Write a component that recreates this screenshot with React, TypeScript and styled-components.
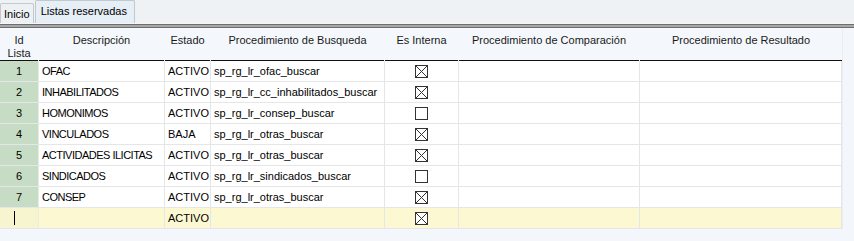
import React from 'react';
import styled, { createGlobalStyle } from 'styled-components';

const GlobalStyle = createGlobalStyle`
  body {
    margin: 0;
    background: #f3f7fb;
    font-family: "Liberation Sans", Arial, sans-serif;
    font-size: 11px;
    color: #000;
  }
`;

const cols = '39px 126px 46px 174px 74px 181px 202px';

const rows = [
  { id: 1, desc: 'OFAC', estado: 'ACTIVO', proc: 'sp_rg_lr_ofac_buscar', interna: true },
  { id: 2, desc: 'INHABILITADOS', estado: 'ACTIVO', proc: 'sp_rg_lr_cc_inhabilitados_buscar', interna: true },
  { id: 3, desc: 'HOMONIMOS', estado: 'ACTIVO', proc: 'sp_rg_lr_consep_buscar', interna: false },
  { id: 4, desc: 'VINCULADOS', estado: 'BAJA', proc: 'sp_rg_lr_otras_buscar', interna: true },
  { id: 5, desc: 'ACTIVIDADES ILICITAS', estado: 'ACTIVO', proc: 'sp_rg_lr_otras_buscar', interna: true },
  { id: 6, desc: 'SINDICADOS', estado: 'ACTIVO', proc: 'sp_rg_lr_sindicados_buscar', interna: false },
  { id: 7, desc: 'CONSEP', estado: 'ACTIVO', proc: 'sp_rg_lr_otras_buscar', interna: true },
];

function App() {
  return (
    <Page>
      <GlobalStyle />
      <TabBar>
        <Tab>Inicio</Tab>
        <Tab active>Listas reservadas</Tab>
      </TabBar>
      <Rule />
      <Body>
        <Grid>
          <HeadRow>
            <HeadCell>Id<br />Lista</HeadCell>
            <HeadCell>Descripción</HeadCell>
            <HeadCell>Estado</HeadCell>
            <HeadCell>Procedimiento de Busqueda</HeadCell>
            <HeadCell>Es Interna</HeadCell>
            <HeadCell>Procedimiento de Comparación</HeadCell>
            <HeadCell>Procedimiento de Resultado</HeadCell>
          </HeadRow>
          {rows.map((r) => (
            <Row key={r.id}>
              <IdCell>{r.id}</IdCell>
              <Cell caps>{r.desc}</Cell>
              <Cell>{r.estado}</Cell>
              <Cell>{r.proc}</Cell>
              <Cell center>
                <Check checked={r.interna} />
              </Cell>
              <Cell />
              <Cell />
            </Row>
          ))}
          <Row isNew>
            <IdCell isNew>
              <Caret />
            </IdCell>
            <Cell />
            <Cell>ACTIVO</Cell>
            <Cell />
            <Cell center>
              <Check checked />
            </Cell>
            <Cell />
            <Cell />
          </Row>
        </Grid>
        <Side />
      </Body>
    </Page>
  );
}

function Check({ checked }: { checked: boolean }) {
  return (
    <svg width="13" height="13" viewBox="0 0 13 13">
      <rect x="0.5" y="0.5" width="12" height="12" fill="#fff" stroke="#333" />
      {checked && <path d="M1 1L12 12M12 1L1 12" stroke="#333" strokeWidth="1" />}
    </svg>
  );
}

export default App;

const Page = styled.div`
  width: 854px;
  height: 241px;
  overflow: hidden;
  background: #f3f7fb;
`;

const TabBar = styled.div`
  display: flex;
  align-items: flex-end;
  height: 23px;
  background: #eff2f4;
`;

const Tab = styled.div<{ active?: boolean }>`
  box-sizing: border-box;
  height: ${(p) => (p.active ? '23px' : '20px')};
  padding: ${(p) => (p.active ? '4px 7px 0 5px' : '4px 3px 0 3px')};
  background: ${(p) => (p.active ? '#e6eef6' : '#eef1f3')};
  border: 1px solid #c2c8ce;
  border-bottom: none;
  border-radius: 2px 2px 0 0;
  margin-right: 1px;
  color: #000;
  font-size: 11px;
`;

const Rule = styled.div`
  height: 4px;
  border-top: 1px solid #6e6e6e;
  border-bottom: 1px solid #6e6e6e;
  background: #a8a8a8;
  box-sizing: border-box;
  margin-top: 1px;
`;

const Body = styled.div`
  display: flex;
`;

const Grid = styled.div`
  display: flex;
  flex-direction: column;
  width: 842px;
`;

const Side = styled.div`
  flex: 1;
  border-left: 1px solid #e9eef3;
  background: #f3f7fb;
`;

const HeadRow = styled.div`
  display: grid;
  grid-template-columns: ${cols};
  height: 33px;
  background: #f4f8fc;
`;

const HeadCell = styled.div`
  box-sizing: border-box;
  text-align: center;
  padding-top: 6px;
  line-height: 13px;
  color: #1a1a1a;
  border-bottom: 2px solid #111;
  margin-right: 1px;
  &:last-child {
    margin-right: 0;
  }
`;

const Row = styled.div<{ isNew?: boolean }>`
  display: grid;
  grid-template-columns: ${cols};
  height: 21px;
  background: ${(p) => (p.isNew ? '#fbf8d2' : '#ffffff')};
`;

const Cell = styled.div<{ center?: boolean; caps?: boolean }>`
  box-sizing: border-box;
  display: flex;
  align-items: center;
  justify-content: ${(p) => (p.center ? 'center' : 'flex-start')};
  padding-left: ${(p) => (p.center ? '0' : '3px')};
  letter-spacing: ${(p) => (p.caps ? '-0.5px' : '0')};
  border-right: 1px solid #e4e6e8;
  border-bottom: 1px solid #e4e6e8;
  white-space: nowrap;
  overflow: hidden;
`;

const IdCell = styled(Cell)<{ isNew?: boolean }>`
  justify-content: center;
  padding-left: 0;
  background: ${(p) => (p.isNew ? '#f7f5d0' : '#c6dcc4')};
  border-right: 1px solid #e8ece4;
`;

const Caret = styled.span`
  display: block;
  width: 1px;
  height: 14px;
  background: #000;
  margin-left: -10px;
`;
